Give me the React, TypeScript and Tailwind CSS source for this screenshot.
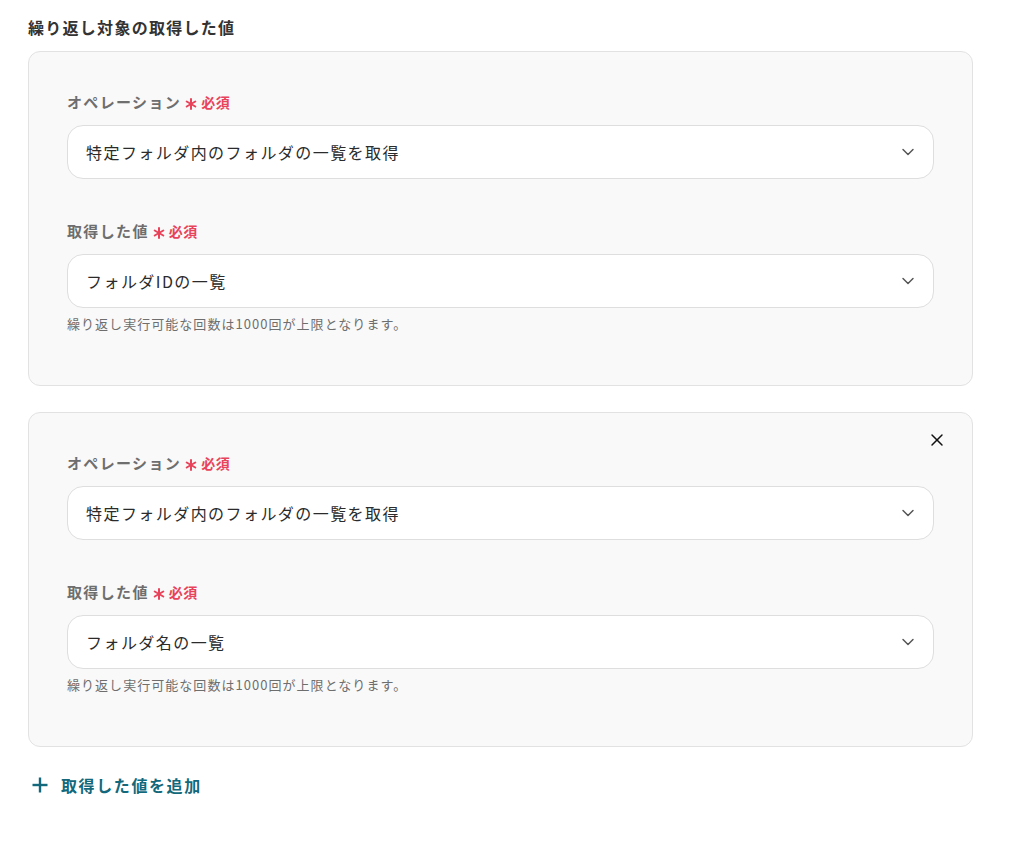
import { ChevronDown, X } from "lucide-react"

interface Field {
  label: string
  value: string
  hint?: string
}

interface Block {
  removable: boolean
  fields: Field[]
}

const HINT = "繰り返し実行可能な回数は1000回が上限となります。"

const blocks: Block[] = [
  {
    removable: false,
    fields: [
      { label: "オペレーション", value: "特定フォルダ内のフォルダの一覧を取得" },
      { label: "取得した値", value: "フォルダIDの一覧", hint: HINT },
    ],
  },
  {
    removable: true,
    fields: [
      { label: "オペレーション", value: "特定フォルダ内のフォルダの一覧を取得" },
      { label: "取得した値", value: "フォルダ名の一覧", hint: HINT },
    ],
  },
]

// six-spoke required marker
function Asterisk() {
  return (
    <svg viewBox="0 0 12 12" className="w-3 h-3 mt-[3px]" stroke="#e8435a" strokeWidth={2} strokeLinecap="round">
      <line x1="6" y1="1" x2="6" y2="11" />
      <line x1="1.7" y1="3.5" x2="10.3" y2="8.5" />
      <line x1="1.7" y1="8.5" x2="10.3" y2="3.5" />
    </svg>
  )
}

function SelectField({ field }: { field: Field }) {
  return (
    <div>
      <div className="flex items-center h-[22px] mb-3">
        <span className="text-[15px] font-bold text-[#6e6e6e] tracking-[0.09em]">{field.label}</span>
        <span className="ml-[4px]">
          <Asterisk />
        </span>
        <span className="ml-[4px] text-[14px] font-bold text-[#e8435a] tracking-[0.04em]">必須</span>
      </div>
      <div className="flex items-center justify-between h-[54px] rounded-2xl border border-[#dedede] bg-white pl-[18px] pr-[15px]">
        <span className="text-[16px] text-[#2b2b2b] tracking-[0.09em]">{field.value}</span>
        <ChevronDown className="w-5 h-5 text-[#555]" strokeWidth={1.75} />
      </div>
      {field.hint && (
        <p className="mt-2 text-[13px] leading-4 text-[#6e6e6e] tracking-[0.08em]">{field.hint}</p>
      )}
    </div>
  )
}

export default function App() {
  return (
    <div
      className="min-h-screen bg-white px-7 pt-[15px]"
      style={{ fontFamily: '"Noto Sans CJK JP", "Noto Sans", sans-serif' }}
    >
      <h2 className="text-[16px] leading-6 font-bold text-[#333] tracking-[0.08em] mb-[12px]">
        繰り返し対象の取得した値
      </h2>

      <div className="w-[945px] flex flex-col gap-[26px]">
        {blocks.map((block, i) => (
          <div
            key={i}
            className="relative rounded-xl border border-[#e2e2e2] bg-[#f9f9f9] px-[38px] pt-[39px] pb-[53px]"
          >
            {block.removable && (
              <button className="absolute right-[25px] top-[17px] text-[#111]" aria-label="削除">
                <X className="w-5 h-5" strokeWidth={1.75} />
              </button>
            )}
            <div className="flex flex-col gap-[41px]">
              {block.fields.map((f, j) => (
                <SelectField key={j} field={f} />
              ))}
            </div>
          </div>
        ))}
      </div>

      {/* add another value row */}
      <button className="mt-[26px] ml-[4px] flex items-center gap-[13px] text-[#13687b]">
        <svg viewBox="0 0 16 16" className="w-4 h-4" stroke="currentColor" strokeWidth={2.4}>
          <line x1="8" y1="0.5" x2="8" y2="15.5" />
          <line x1="0.5" y1="8" x2="15.5" y2="8" />
        </svg>
        <span className="text-[16px] leading-6 font-bold tracking-[0.1em]">取得した値を追加</span>
      </button>
    </div>
  )
}
